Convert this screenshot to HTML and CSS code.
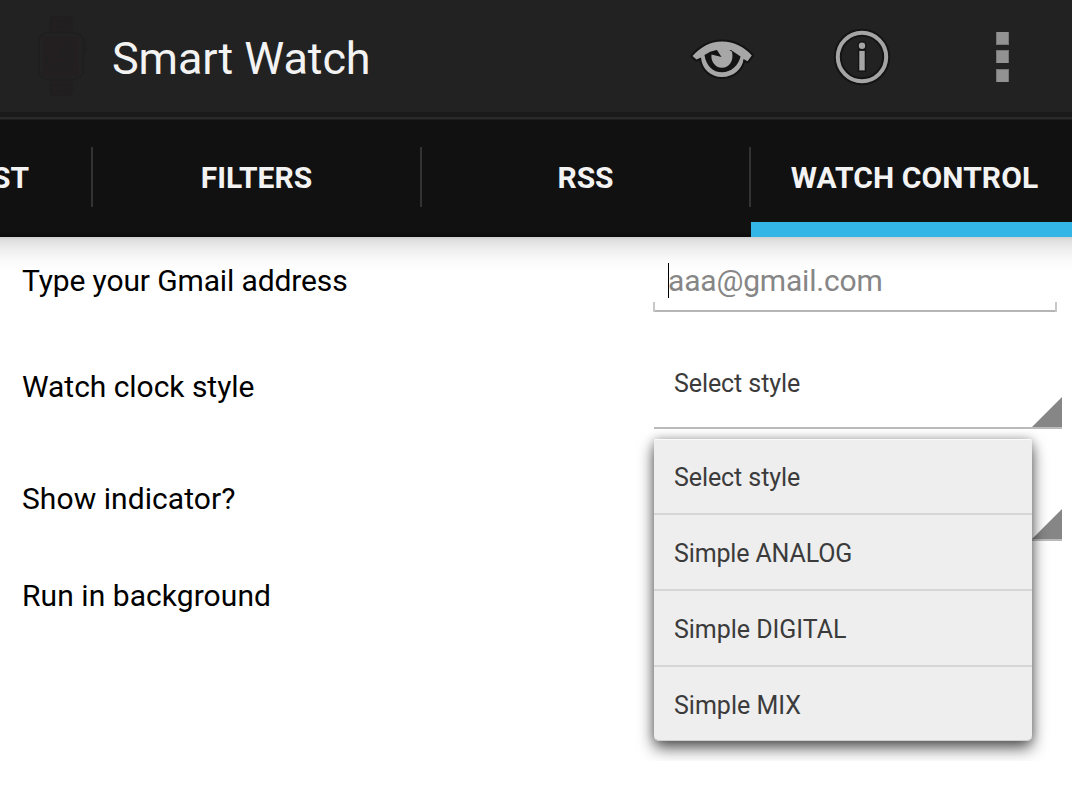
FILE: index.html
```
<!DOCTYPE html>
<html lang="en">
<head>
<meta charset="utf-8">
<title>Smart Watch</title>
<link rel="stylesheet" href="styles.css">
</head>
<body>
<header class="bar">
  <svg class="logo" width="54" height="88" viewBox="0 0 54 88" fill="none">
    <g fill="#231f20" stroke="#1f1f1f" stroke-width="2">
      <path d="M13 20V8l2-5h18l2 5v12zM13 66v10l2 5h18l2-5V66z"/>
      <path d="M14 8h20M14 13h20M14 71h20M14 76h20"/>
      <rect x="2" y="19" width="44" height="46" rx="8" fill="#222"/>
      <rect x="6" y="23" width="36" height="39" rx="4" stroke="none"/>
      <path d="M47 28h1.500v10H47"/>
    </g>
    <path d="M9 40c-1 9 6 16 14 16s15-7 14-15c0-7-6-13-13-14M17 46c4 5 11 5 14 0 4-6 1-12-5-13M23 36c4 0 5 7 0 8" stroke="#202021" stroke-width="2"/>
  </svg>
  <h1 class="title">Smart Watch</h1>
  <nav class="actions">
    <svg class="eye" width="64" height="42" viewBox="690 38 64 42">
      <g fill="#a7a7a7">
        <path d="M692.500 56C700 47.500 710 41.500 722 41.500S745 47.500 751.800 55.500L747.500 61.300L743.500 59C742.500 69 733.500 77 722 77S702 69 701 57.500L696.500 59.500Z" stroke="#131313" stroke-width="4" stroke-linejoin="round" paint-order="stroke"/>
        <path fill="#131313" d="M704.500 55Q710 51 716.500 50H731L740.500 56.500C738.500 65.500 731 72.300 722 72.300S706 66 704.500 55Z"/>
        <path d="M716.800 49.800L721.500 57L711.500 54.500C710.500 61 715 67.800 722 67.800C729.500 67.800 734 60.500 732 51.800L727 48.500Z"/>
      </g>
    </svg>
    <svg class="info" width="60" height="60" viewBox="0 0 60 60">
      <circle cx="30" cy="30" r="24.200" fill="none" stroke="#141414" stroke-width="8"/>
      <circle cx="30" cy="30" r="24.200" fill="none" stroke="#a5a5a5" stroke-width="4"/>
      <g fill="#a5a5a5" stroke="#141414" stroke-width="3" paint-order="stroke"><circle cx="30" cy="18.800" r="3.200"/><rect x="27.300" y="23.900" width="5.400" height="19.500"/></g>
    </svg>
    <span class="more"><i class="dot"></i><i class="dot"></i><i class="dot"></i></span>
  </nav>
</header>
<nav class="tabs">
  <a class="tab first">ST</a><a class="tab">FILTERS</a><a class="tab">RSS</a><a class="tab last">WATCH CONTROL</a>
</nav>
<main class="form">
  <section class="row gmail"><span class="label l1">Type your Gmail address</span><div class="input"><span class="hint">aaa@gmail.com</span></div></section>
  <section class="row clock"><span class="label l2">Watch clock style</span>
    <div class="spinner"><span class="value">Select style</span>
      <div class="popup-clip"><ul class="popup">
        <li class="item"><span class="value">Select style</span></li>
        <li class="item"><span class="analog">Simple ANALOG</span></li>
        <li class="item"><span class="digital">Simple DIGITAL</span></li>
        <li class="item"><span class="mix">Simple MIX</span></li>
      </ul></div>
    </div>
  </section>
  <section class="row indicator"><span class="label l3">Show indicator?</span><div class="spinner"></div></section>
  <section class="row background"><span class="label l4">Run in background</span></section>
</main>
</body>
</html>
```

FILE: styles.css
```
* { box-sizing: border-box; }
body { margin: 0; width: 1072px; height: 808px; overflow: hidden; background: #fff; font-family: Roboto, sans-serif; color: #000; }
.bar { display: flex; align-items: center; height: 120px; padding: 0 63px 3px 37px; background: linear-gradient(#222 112px, #1a1a1a 112px, #1a1a1a 117px, #2b2b2b 117px, #2b2b2b 119px, #1c1c1c 119px); }
.logo { flex: none; margin-top: -1px; }
.title { width: 260px; margin: 0 0 0 21px; font-size: 45px; font-weight: 400; line-height: 60px; letter-spacing: -.1px; color: #f3f3f3; white-space: nowrap; }
.actions { display: flex; align-items: center; margin-left: auto; }
.info { margin-left: 78px; margin-top: -3px; }
.more { display: flex; flex-direction: column; margin: -3px 0 0 104px; }
.dot { width: 13px; height: 13px; background: #929292; border: 1px solid #777; border-top: 0; }
.dot + .dot { margin-top: 5px; border-top: 1px solid #777; border-bottom: 0; }
.dot:last-child { margin-top: 6px; }
.tabs { display: flex; height: 117px; background: linear-gradient(#111 112px, #0b0b0b); overflow: hidden; }
.tab { position: relative; flex: none; width: 329px; padding: 38px 2px 0 0; line-height: 40px; text-align: center; font-size: 30px; font-weight: 700; color: #f3f3f3; white-space: nowrap; }
.tab.first { width: 93px; text-align: left; text-indent: -8px; }
.tab.last { width: 321px; padding: 38px 0 0 6px; border-bottom: 15px solid #33b5e5; letter-spacing: .1px; }
.tab:not(.last)::after { content: ""; position: absolute; right: 0; top: 27px; width: 2px; height: 60px; background: #333; }
.form { display: grid; grid-template-rows: 88px 124px 100px 94px; height: 571px; align-content: start; background: linear-gradient(#d0d0d0 0, #dedede 3px, #eee 12px, #fafafa 23px, #fff 34px); }
.row { display: flex; align-items: center; justify-content: space-between; padding: 0 10px 0 22px; }
.label { font-size: 30px; line-height: 40px; white-space: nowrap; }
.l1 { letter-spacing: -.13px; }
.l2 { letter-spacing: -.04px; }
.l3, .l4 { letter-spacing: .06px; }
.input { align-self: flex-end; width: 404px; height: 63px; margin: 0 5px 13px 0; padding: 14px 0 0 15px; background: linear-gradient(#c8c8c8, #c8c8c8) 0 100% / 2px 10px no-repeat, linear-gradient(#c8c8c8, #c8c8c8) 100% 100% / 2px 10px no-repeat, linear-gradient(#b5b5b5, #b5b5b5) 0 100% / 100% 2px no-repeat; }
.hint { display: block; width: fit-content; height: 35px; line-height: 36px; font-size: 30px; letter-spacing: -.18px; text-indent: -1px; color: #868686; border-left: 1px solid #000; }
.spinner { position: relative; align-self: flex-end; width: 408px; height: 90px; margin-bottom: 20px; padding: 29px 0 0 20px; font-size: 25px; line-height: 32px; color: #3b3b3b; border-bottom: 2px solid #bbb; }
.spinner::after { content: ""; position: absolute; right: 0; bottom: 0; width: 30px; height: 30px; background: #868686; clip-path: polygon(100% 0, 100% 100%, 0 100%); }
.value { letter-spacing: -.08px; }
.analog { letter-spacing: -.14px; }
.digital { letter-spacing: -.03px; }
.indicator .spinner { margin-bottom: 8px; }
.popup-clip { position: absolute; z-index: 2; left: -20px; top: 80px; width: 418px; height: 342px; padding: 20px; overflow: hidden; }
.popup { width: 378px; height: 302px; margin: 0; padding: 0; list-style: none; background: #eee; border-radius: 2px 2px 5px 5px; box-shadow: inset 0 1px #fafafa, inset 0 -1px #d0d0d0, 0 7px 16px rgba(0,0,0,.66), 0 0 10px rgba(0,0,0,.22); }
.item { height: 76px; padding: 23px 20px 0; border-bottom: 2px solid #d6d6d6; white-space: nowrap; }
.item:last-child { border-bottom: 0; }
```
